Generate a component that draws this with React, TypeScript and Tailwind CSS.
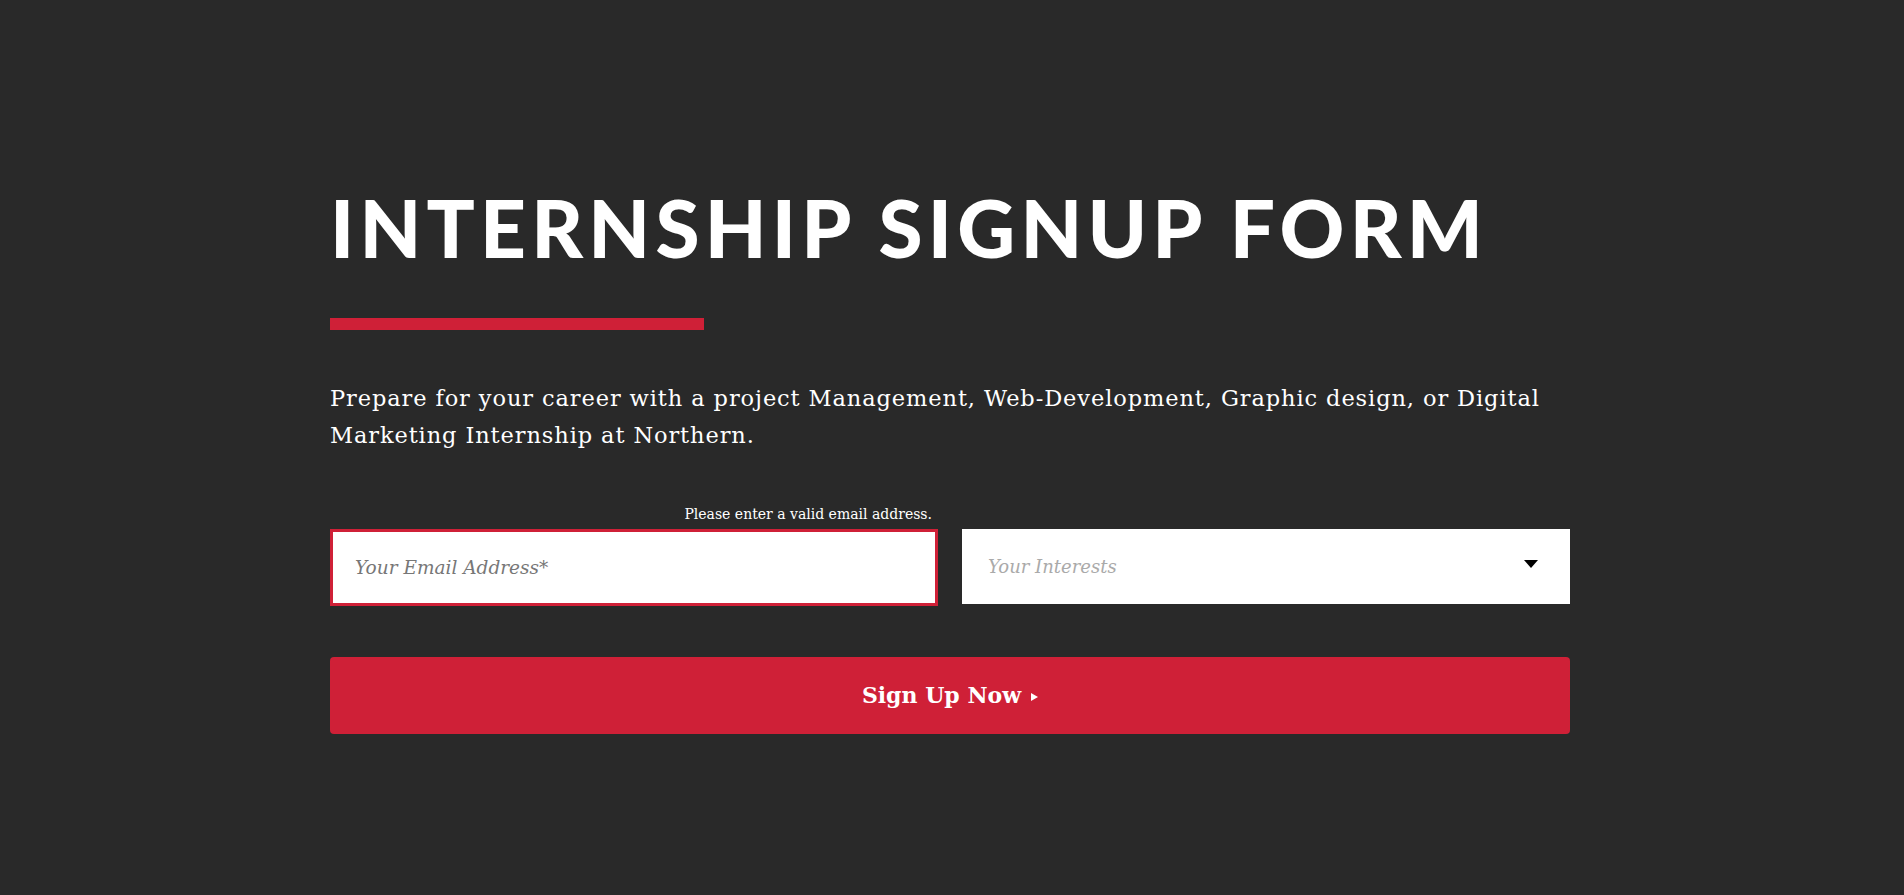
import { FC } from 'react';

const serif = { fontFamily: '"DejaVu Serif", "Liberation Serif", serif' };

const App: FC = () => {
    return (
        <div className="min-h-screen bg-[#292929] pt-[187px]">
            <div className="ml-[330px] w-[1240px]">
                <h1
                    className="text-[80px] leading-none font-black text-white tracking-[5.2px] whitespace-nowrap"
                    style={{ fontFamily: 'Lato, "Open Sans", sans-serif' }}
                >
                    INTERNSHIP SIGNUP FORM
                </h1>
                <div className="mt-[51px] h-[12px] w-[374px] bg-[#cf2037]" />
                <p
                    className="mt-[50px] text-[22.5px] leading-[37px] tracking-[0.9px] text-white"
                    style={serif}
                >
                    Prepare for your career with a project Management, Web-Development, Graphic design, or Digital
                    Marketing Internship at Northern.
                </p>
                <form className="mt-[50px]" onSubmit={(e) => e.preventDefault()}>
                    <div className="grid grid-cols-2 gap-[24px] items-end">
                        <div className="flex flex-col">
                            <span
                                className="self-end pr-[6px] text-[14px] leading-[20px] text-white"
                                style={serif}
                            >
                                Please enter a valid email address.
                            </span>
                            <input
                                type="email"
                                placeholder="Your Email Address*"
                                className="mt-[5px] h-[77px] w-full bg-white border-[3px] border-[#cf2037] px-[22px] text-[18.5px] italic text-[#333] placeholder:text-[#777] outline-none"
                                style={serif}
                            />
                        </div>
                        <div className="relative mb-[2px]">
                            <select
                                defaultValue=""
                                className="h-[75px] w-full appearance-none bg-white px-[26px] text-[18px] italic text-[#aaa] outline-none"
                                style={serif}
                            >
                                <option value="" disabled>
                                    Your Interests
                                </option>
                                <option>Project Management</option>
                                <option>Web-Development</option>
                                <option>Graphic Design</option>
                                <option>Digital Marketing</option>
                            </select>
                            <svg
                                className="pointer-events-none absolute right-[32px] top-[31px]"
                                width="14"
                                height="8"
                                viewBox="0 0 14 8"
                            >
                                <path d="M0 0h14L7 8z" fill="#000" />
                            </svg>
                        </div>
                    </div>
                    <button
                        type="submit"
                        className="mt-[51px] flex h-[77px] w-full items-center justify-center gap-[10px] rounded-[4px] bg-[#cf2037] text-[22px] font-bold text-white"
                        style={serif}
                    >
                        <span>Sign Up Now</span>
                        <svg width="7" height="8" viewBox="0 0 7 8" className="mt-[2px]">
                            <path d="M0 0l7 4-7 4z" fill="#fff" />
                        </svg>
                    </button>
                </form>
            </div>
        </div>
    );
};

export default App;
